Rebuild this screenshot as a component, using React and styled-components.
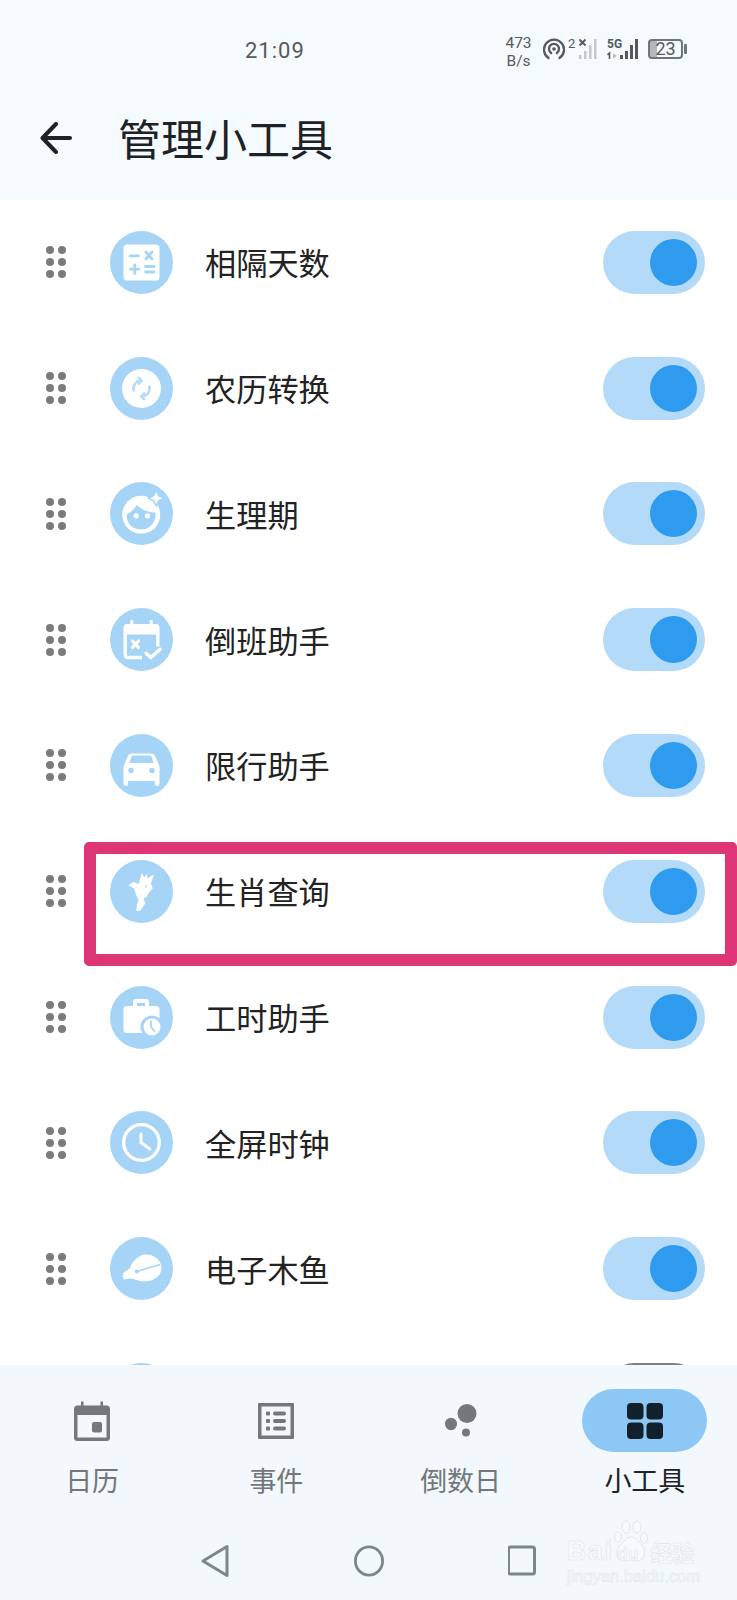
import React from "react";
import styled, { createGlobalStyle } from "styled-components";

const cjk = `"Noto Sans CJK SC", "Noto Sans", sans-serif`;

const GlobalStyle = createGlobalStyle`
  html, body {
    margin: 0;
    padding: 0;
    background: #fff;
  }
`;

const Page = styled.div`
  width: 737px;
  height: 1600px;
  display: flex;
  flex-direction: column;
  overflow: hidden;
  font-family: ${cjk};
  background: #fff;
`;

const Header = styled.header`
  position: relative;
  z-index: 1;
  flex: 0 0 200px;
  background: #f5faff;
  display: flex;
  flex-direction: column;
`;

const StatusBar = styled.div`
  height: 88px;
  display: flex;
  align-items: flex-start;
  padding-top: 38px;
  padding-left: 245px;
  box-sizing: border-box;
  color: #55595c;
`;

const Time = styled.div`
  font-family: Roboto, sans-serif;
  font-size: 22px;
  line-height: 26px;
  letter-spacing: 1px;
  width: 261px;
`;

const NetSpeed = styled.div`
  width: 37px;
  margin-top: -4px;
  font-family: Roboto, sans-serif;
  font-size: 15.5px;
  line-height: 18px;
  text-align: center;
  transform: translateX(-6px);
`;

const StatusGlyphs = styled.div`
  display: flex;
  align-items: flex-start;
`;

const SimBadge = styled.span`
  font-family: Roboto, sans-serif;
  font-size: 13px;
  line-height: 12px;
  width: 13px;
  padding-left: 3px;
  box-sizing: border-box;
  margin-top: 0;
`;

const Battery = styled.div`
  position: relative;
  width: 35px;
  height: 20px;
  box-sizing: border-box;
  margin-left: 7px;
  margin-top: 1px;
  border: 2px solid #707578;
  border-radius: 4px;
  font-family: Roboto, sans-serif;
  font-size: 18px;
  line-height: 16px;
  text-align: center;
  color: #55595c;
  background: linear-gradient(90deg, #b5b8ba 0 7px, transparent 7px);
  &::after {
    content: "";
    position: absolute;
    right: -6px;
    top: 3px;
    width: 3px;
    height: 10px;
    background: #707578;
    border-radius: 1px;
  }
`;

const TitleBar = styled.div`
  height: 100px;
  display: flex;
  align-items: center;
  padding-left: 40px;
  gap: 46px;
`;

const Title = styled.h1`
  margin: -3px 0 0;
  font-size: 43px;
  line-height: 60px;
  font-weight: 400;
  color: #1d2226;
`;

const List = styled.main`
  flex: 1;
  min-height: 0;
  margin-top: -0.6px;
  overflow: hidden;
`;

const Row = styled.div`
  position: relative;
  height: 125.8px;
  display: flex;
  align-items: center;
  padding: 0 32px 0 46px;
  box-sizing: border-box;
`;

const Grip = styled.div`
  display: grid;
  grid-template-columns: 8px 8px;
  grid-auto-rows: 8px;
  gap: 4px;
  width: 20px;
  & > i {
    border-radius: 50%;
    background: #7b7b7b;
  }
`;

const IconDisc = styled.div`
  width: 63px;
  height: 63px;
  margin-left: 44px;
  border-radius: 50%;
  background: #a6d4f7;
  flex: none;
  & > svg {
    display: block;
  }
`;

const Label = styled.div`
  flex: 1;
  margin-left: 32px;
  font-size: 31.2px;
  line-height: 44px;
  color: #222;
`;

const Toggle = styled.div`
  width: 102px;
  height: 63px;
  border-radius: 32px;
  display: flex;
  align-items: center;
  justify-content: ${({ $on }) => ($on ? "flex-end" : "flex-start")};
  padding: 0 8px;
  box-sizing: border-box;
  background: ${({ $on }) => ($on ? "#b3dbf9" : "#7d8184")};
  & > i {
    width: 47px;
    height: 47px;
    border-radius: 50%;
    background: ${({ $on }) => ($on ? "#2f9bef" : "#fff")};
  }
`;

const Highlight = styled.div`
  position: absolute;
  left: 84px;
  right: 0;
  top: 13.5px;
  height: 124px;
  box-sizing: border-box;
  border: 12px solid #de3576;
  border-radius: 5px;
  z-index: 2;
`;

const BottomNav = styled.nav`
  position: relative;
  flex: 0 0 235px;
  background: #f2f8fc;
  z-index: 3;
  display: flex;
  flex-direction: column;
  padding-top: 24px;
  box-sizing: border-box;
`;

const Tabs = styled.div`
  display: grid;
  grid-template-columns: repeat(4, 1fr);
`;

const Tab = styled.div`
  display: flex;
  flex-direction: column;
  align-items: center;
  color: ${({ $active }) => ($active ? "#1d2226" : "#72777b")};
`;

const TabIcon = styled.div`
  width: 125px;
  height: 63px;
  border-radius: 32px;
  display: flex;
  align-items: center;
  justify-content: center;
  background: ${({ $active }) => ($active ? "#8cc7f5" : "transparent")};
`;

const TabLabel = styled.div`
  margin-top: 10px;
  font-size: 27px;
  line-height: 36px;
`;

const SystemNav = styled.div`
  margin-top: 46px;
  display: flex;
  justify-content: center;
  gap: 124px;
  & > svg {
    display: block;
  }
`;

const Watermark = styled.div`
  position: absolute;
  left: 565px;
  top: 155px;
  width: 135px;
  height: 66px;
  color: #f6fafc;
  font-family: "Liberation Sans", sans-serif;
  -webkit-text-stroke: 0.6px #e0e6ea;
`;

const WatermarkBrand = styled.div`
  display: flex;
  align-items: flex-end;
  height: 44px;
`;

const WatermarkBai = styled.span`
  font-size: 27px;
  line-height: 26px;
  font-weight: 700;
  letter-spacing: 1.5px;
  margin-left: 2px;
`;

const WatermarkPaw = styled.div`
  position: relative;
  width: 36px;
  height: 44px;
  flex: none;
  margin-left: -1px;
  & > svg {
    display: block;
  }
  & > span {
    position: absolute;
    left: 5px;
    bottom: 1px;
    font-size: 17px;
    line-height: 18px;
    font-weight: 700;
  }
`;

const WatermarkCn = styled.span`
  font-family: ${cjk};
  font-size: 22px;
  line-height: 26px;
  margin-left: 2px;
  font-weight: 700;
`;

const WatermarkUrl = styled.div`
  margin-top: 2px;
  margin-left: 2px;
  font-size: 16.5px;
  line-height: 20px;
  white-space: nowrap;
  -webkit-text-stroke: 0.5px #e0e6ea;
`;

const white = "#fff";
const blue = "#a6d4f7";

const Glyph = ({ children }) => (
  <svg width="63" height="63" viewBox="0 0 63 63">
    {children}
  </svg>
);

const CalcIcon = () => (
  <Glyph>
    <rect x="13.5" y="13.5" width="36" height="36" rx="3.5" fill={white} />
    <g stroke={blue} strokeWidth="2.8" strokeLinecap="round" fill="none">
      <path d="M20 24.8h8.5M36 21l6 7M42 21l-6 7M20.5 38.2h8.5M24.8 34v8.5M35.5 35.5h8.5M35.5 41h8.5" />
    </g>
  </Glyph>
);

const SyncIcon = () => (
  <Glyph>
    <circle cx="31.5" cy="31.5" r="19.5" fill={white} />
    <g stroke="#b7dcf6" strokeWidth="2.6" fill="none" strokeLinecap="round" strokeLinejoin="round">
      <path d="M23.7 33.500a8 8 0 0 1 7.300-10" />
      <path d="M39.300 29.500a8 8 0 0 1-7.300 10" />
      <path d="M28.700 20.800l3.100 2.800-2.900 2.900M34.300 42.200l-3.100-2.800 2.900-2.900" />
    </g>
  </Glyph>
);

const FaceIcon = () => (
  <Glyph>
    <circle cx="31.2" cy="32.8" r="19" fill={white} />
    <path
      d="M16.800 32.200C21 30 25 27 26.800 22.800 30 27 38 30.500 45.500 30.500 46.500 40 40 47.500 31.200 47.500 22 47.500 16 41 16.800 32.200z"
      fill={blue}
    />
    <circle cx="26.200" cy="33.800" r="2.600" fill={white} />
    <circle cx="37.500" cy="33.800" r="2.600" fill={white} />
    <path d="M46.200 8.500l2.500 5.200 5.200 2.500-5.200 2.500-2.500 5.200-2.500-5.200-5.200-2.500 5.200-2.500z" fill={white} stroke={blue} strokeWidth="1.500" />
  </Glyph>
);

const ShiftIcon = () => (
  <Glyph>
    <rect x="20.300" y="12" width="3" height="8" rx="1" fill={white} />
    <rect x="39.700" y="12" width="3" height="8" rx="1" fill={white} />
    <path d="M17 16h29a3.500 3.500 0 0 1 3.500 3.500V26.500h-36v-7A3.500 3.500 0 0 1 17 16z" fill={white} />
    <path d="M15.200 25v22a2.500 2.500 0 0 0 2.500 2.500H32M47.800 25v13.500" stroke={white} strokeWidth="3.400" fill="none" />
    <path d="M22.500 33l6 6.400M28.500 33l-6 6.400" stroke={white} strokeWidth="3.200" strokeLinecap="round" />
    <path d="M36.200 45.200l4.600 4.300 9.400-8.300" stroke={white} strokeWidth="3.400" fill="none" strokeLinecap="round" strokeLinejoin="round" />
  </Glyph>
);

const CarIcon = () => (
  <Glyph>
    <path
      d="M22 19.500h19c2 0 3.500 1 4.300 3l4.200 10v17.200a2.300 2.300 0 0 1-4.600 0V47H18.100v2.700a2.300 2.300 0 0 1-4.600 0V32.500l4.200-10c.8-2 2.300-3 4.300-3z"
      fill={white}
    />
    <path d="M23.500 21.500h16c1 0 1.700.5 2 1.300l2.200 6.200H19.300l2.200-6.200c.3-.8 1-1.300 2-1.300z" fill={blue} />
    <circle cx="21" cy="36.500" r="2.700" fill={blue} />
    <circle cx="42" cy="36.500" r="2.700" fill={blue} />
  </Glyph>
);

const DragonIcon = () => (
  <Glyph>
    <path
      d="M31.800 12.800L34.200 17.500 36.800 14.200 37.500 18.500 44.200 14.200 40.800 23.500 42.800 28.500 39.500 31.800 36.800 36.800 33.500 38.500 35.200 43.500 30.200 50.800 26.200 50.800 26.800 45.200 28.500 40.200 26.200 35.200 24.200 28.500 18.500 25.200 23.500 21.800 28.500 24.200 30.200 18.500z"
      fill={white}
    />
    <circle cx="36" cy="26.500" r="1" fill={blue} />
  </Glyph>
);

const CaseIcon = () => (
  <Glyph>
    <path d="M23 20.500v-4.500a3 3 0 0 1 3-3h10a3 3 0 0 1 3 3v4.500h-4v-3.500h-8v3.500z" fill={white} />
    <rect x="13.500" y="20" width="36" height="27" rx="3.500" fill={white} />
    <circle cx="42" cy="41" r="11.500" fill={blue} />
    <circle cx="42" cy="41" r="8.500" fill={white} />
    <path d="M41 35.500v5.500l3.500 4" stroke={blue} strokeWidth="1.800" fill="none" strokeLinecap="round" />
  </Glyph>
);

const ClockIcon = () => (
  <Glyph>
    <circle cx="31.500" cy="31.500" r="17.800" fill="none" stroke={white} strokeWidth="3.300" />
    <path d="M31 23v8.500l8.700 6.500" fill="none" stroke={white} strokeWidth="3" strokeLinecap="round" strokeLinejoin="round" />
  </Glyph>
);

const WoodfishIcon = () => (
  <Glyph>
    <path
      d="M12.500 38.500C13 35 17 34 20 31 22 24 29 17.500 36 17.500 44 17.500 51.500 23 51.500 31 51.500 39 43 44.500 35 44.500 28 44.500 25 41.500 20 41.500 17 41.500 15 43 13.500 42z"
      fill={white}
    />
    <path d="M26.800 34.500L50.200 27.500" stroke={blue} strokeWidth="1.400" />
    <circle cx="26.800" cy="34.500" r="2" fill={blue} />
  </Glyph>
);

const widgets = [
  { label: "相隔天数", Icon: CalcIcon },
  { label: "农历转换", Icon: SyncIcon },
  { label: "生理期", Icon: FaceIcon },
  { label: "倒班助手", Icon: ShiftIcon },
  { label: "限行助手", Icon: CarIcon },
  { label: "生肖查询", Icon: DragonIcon, marked: true },
  { label: "工时助手", Icon: CaseIcon },
  { label: "全屏时钟", Icon: ClockIcon },
  { label: "电子木鱼", Icon: WoodfishIcon },
  { label: "", Icon: () => null, off: true },
];

const grey = "#73787c";

const CalendarTab = () => (
  <svg width="36" height="40" viewBox="0 0 36 40">
    <path d="M7 0.500h2.500v4h17v-4H29v4h3.500A3.500 3.500 0 0 1 36 8v28.500a3.500 3.500 0 0 1-3.500 3.500h-29A3.500 3.500 0 0 1 0 36.500V8a3.500 3.500 0 0 1 3.500-3.500H7z" fill={grey} />
    <rect x="3.500" y="14" width="29" height="22.500" fill="#f2f8fc" />
    <rect x="18" y="21" width="10" height="10.500" rx="2" fill={grey} />
  </svg>
);

const ListTab = () => (
  <svg width="36" height="36" viewBox="0 0 36 36">
    <path fillRule="evenodd" d="M1 0h34a1 1 0 0 1 1 1v34a1 1 0 0 1-1 1H1a1 1 0 0 1-1-1V1a1 1 0 0 1 1-1zm2.500 3.500v29h29v-29z" fill={grey} />
    <g fill={grey}>
      <rect x="8" y="8.500" width="4" height="4" rx="1" />
      <rect x="8" y="16" width="4" height="4" rx="1" />
      <rect x="8" y="23.500" width="4" height="4" rx="1" />
      <rect x="15" y="8.500" width="13" height="4" rx="2" />
      <rect x="15" y="16" width="13" height="4" rx="2" />
      <rect x="15" y="23.500" width="13" height="4" rx="2" />
    </g>
  </svg>
);

const DotsTab = () => (
  <svg width="32" height="34" viewBox="0 0 32 34">
    <ellipse cx="22" cy="9.500" rx="9.500" ry="9.500" fill={grey} />
    <ellipse cx="6" cy="20" rx="6" ry="6.200" fill={grey} />
    <ellipse cx="21" cy="28.500" rx="4" ry="4" fill={grey} />
  </svg>
);

const GridTab = () => (
  <svg width="36" height="36" viewBox="0 0 36 36">
    <g fill="#12202b">
      <rect width="16.500" height="16.500" rx="4" />
      <rect x="19.500" width="16.500" height="16.500" rx="4" />
      <rect y="19.500" width="16.500" height="16.500" rx="4" />
      <rect x="19.500" y="19.500" width="16.500" height="16.500" rx="4" />
    </g>
  </svg>
);

const tabs = [
  { label: "日历", Icon: CalendarTab },
  { label: "事件", Icon: ListTab },
  { label: "倒数日", Icon: DotsTab },
  { label: "小工具", Icon: GridTab, active: true },
];

const Hotspot = () => (
  <svg width="22" height="22" viewBox="0 0 22 22">
    <g fill="none" stroke="#55595c" strokeWidth="2.300" strokeLinecap="round">
      <path d="M5.500 20a10 10 0 1 1 11 0" />
      <path d="M8.200 15a5 5 0 1 1 5.600 0" />
    </g>
    <circle cx="11" cy="11" r="1.800" fill="#55595c" />
  </svg>
);

const SignalOne = () => (
  <svg width="24" height="22" viewBox="0 0 24 22">
    <path d="M1.500 1.500l6 6M7.500 1.500l-6 6" stroke="#55595c" strokeWidth="1.800" />
    <g fill="#c4c8ca">
      <rect x="1" y="17" width="2.500" height="4" />
      <rect x="6" y="13" width="2.500" height="8" />
      <rect x="11" y="7" width="2.500" height="14" />
      <rect x="16" y="1" width="2.500" height="20" />
    </g>
  </svg>
);

const SignalTwo = () => (
  <svg width="34" height="22" viewBox="0 0 34 22" style={{ marginLeft: 5 }}>
    <text x="0" y="10" fontFamily="Liberation Sans Narrow, Roboto, sans-serif" fontSize="12" fontWeight="700" fill="#55595c">5G</text>
    <path d="M2.500 21v-6l-2 1.800" stroke="#55595c" strokeWidth="1.600" fill="none" />
    <path d="M6 15.500l3.500 2.500-3.500 2.500z" fill="#b0b4b6" />
    <g fill="#55595c">
      <rect x="13" y="17" width="3" height="4" />
      <rect x="18" y="13" width="3" height="8" />
      <rect x="23" y="7" width="3" height="14" />
      <rect x="28" y="1" width="3" height="20" />
    </g>
  </svg>
);

const navStroke = "#7f868a";

const BackKey = () => (
  <svg width="30" height="34" viewBox="0 0 30 34">
    <path d="M27 2.500v29L3 17z" fill="none" stroke={navStroke} strokeWidth="3" strokeLinejoin="round" />
  </svg>
);

const HomeKey = () => (
  <svg width="30" height="34" viewBox="0 0 32 34">
    <ellipse cx="16" cy="17" rx="14.500" ry="15" fill="none" stroke={navStroke} strokeWidth="3" />
  </svg>
);

const RecentKey = () => (
  <svg width="30" height="34" viewBox="0 0 30 34">
    <rect x="0.500" y="3" width="26" height="27" rx="2" fill="none" stroke={navStroke} strokeWidth="3" />
  </svg>
);

const App = () => (
  <Page>
    <GlobalStyle />
    <Header>
      <StatusBar>
        <Time>21:09</Time>
        <NetSpeed>
          473
          <br />
          B/s
        </NetSpeed>
        <StatusGlyphs>
          <Hotspot />
          <SimBadge>2</SimBadge>
          <SignalOne />
          <SignalTwo />
          <Battery>23</Battery>
        </StatusGlyphs>
      </StatusBar>
      <TitleBar>
        <svg width="32" height="32" viewBox="0 0 32 32">
          <path d="M16 2L2.500 16 16 30M3 16h27" fill="none" stroke="#1d2226" strokeWidth="4" strokeLinecap="round" strokeLinejoin="round" />
        </svg>
        <Title>管理小工具</Title>
      </TitleBar>
    </Header>

    <List>
      {widgets.map(({ label, Icon, marked, off }, i) => (
        <Row key={i}>
          <Grip>
            <i />
            <i />
            <i />
            <i />
            <i />
            <i />
          </Grip>
          <IconDisc>
            <Icon />
          </IconDisc>
          <Label>{label}</Label>
          <Toggle $on={!off}>
            <i />
          </Toggle>
          {marked && <Highlight />}
        </Row>
      ))}
    </List>

    <BottomNav>
      <Tabs>
        {tabs.map(({ label, Icon, active }) => (
          <Tab key={label} $active={active}>
            <TabIcon $active={active}>
              <Icon />
            </TabIcon>
            <TabLabel>{label}</TabLabel>
          </Tab>
        ))}
      </Tabs>
      <SystemNav>
        <BackKey />
        <HomeKey />
        <RecentKey />
      </SystemNav>
      <Watermark>
        <WatermarkBrand>
          <WatermarkBai>Bai</WatermarkBai>
          <WatermarkPaw>
            <svg width="36" height="44" viewBox="0 0 36 44">
              <g fill="#f6fafc" stroke="#e0e6ea" strokeWidth="1">
                <ellipse cx="5" cy="17" rx="3.500" ry="5" />
                <ellipse cx="13" cy="7" rx="4" ry="6" />
                <ellipse cx="24" cy="7" rx="4" ry="6" />
                <ellipse cx="31" cy="18" rx="3.500" ry="5" />
                <path d="M18 17c5 0 7 5 11 8 5 4 3 16-5 16-3 0-4-1-6-1s-4 1-7 1c-8 0-9-11-4-16 4-3 6-8 11-8z" />
              </g>
            </svg>
            <span>du</span>
          </WatermarkPaw>
          <WatermarkCn>经验</WatermarkCn>
        </WatermarkBrand>
        <WatermarkUrl>jingyan.baidu.com</WatermarkUrl>
      </Watermark>
    </BottomNav>
  </Page>
);

export default App;
